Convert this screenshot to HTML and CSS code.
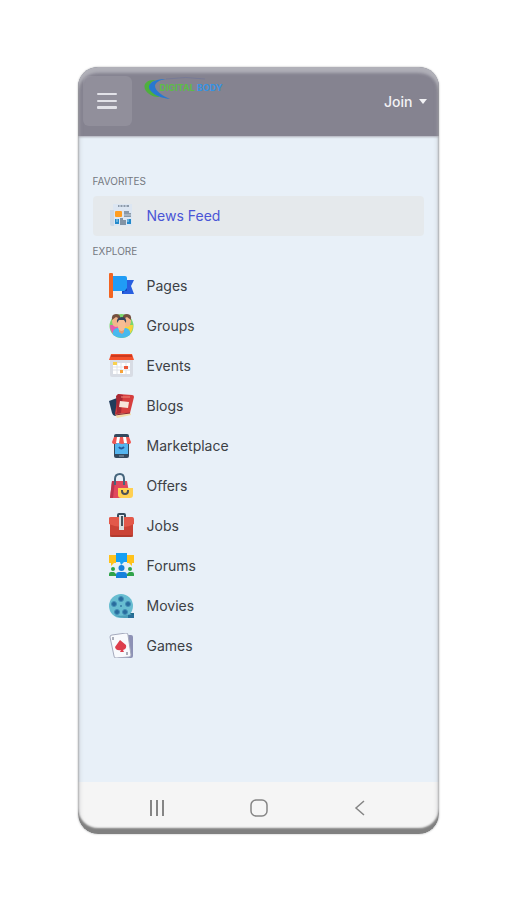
FILE: index.html
```html
<!DOCTYPE html>
<html lang="en">
<head>
<meta charset="utf-8">
<meta name="viewport" content="width=device-width, initial-scale=1">
<title>Menu</title>
<link rel="stylesheet" href="styles.css">
</head>
<body>
<div class="phone">
  <header class="topbar">
    <button class="menu-button" type="button" aria-label="Menu">
      <svg width="20" height="16" viewBox="0 0 20 16" fill="#e2e2e8"><rect y="0" width="20" height="2" rx="1"/><rect y="7" width="20" height="2" rx="1"/><rect y="13" width="20" height="3" rx="1"/></svg>
    </button>
    <a class="brand" href="#">
      <svg class="swoosh" width="64" height="24" viewBox="0 0 64 24">
        <path d="M12 4C2 3-2 9 2 15c4 5 9 6 14 6C10 18 6 15 6 10c0-3 2-5 6-6z" fill="#4fb03d"/>
        <path d="M22 3C13 3 7 5 5 10c-1 5 8 12 21 13-7-3-15-8-15-13 0-3 4-6 11-7z" fill="#2878d0"/>
        <path d="M22 3Q42 0 61 3" fill="none" stroke="#777a96"/>
      </svg>
      <span class="brand-text"><span class="brand-first">DIGITAL</span> <span class="brand-second">BODY</span></span>
    </a>
    <button class="join" type="button">Join
      <svg width="8" height="5" viewBox="0 0 8 5"><path d="M0 0h8L4 5z" fill="#f2f2f5"/></svg>
    </button>
  </header>
  <main class="panel">
    <h2 class="heading">FAVORITES</h2>
    <ul class="list">
      <li><a class="item active" href="#">
        <svg class="icon" viewBox="0 0 25 25"><path d="M4 1h19v22H4z" fill="#dce6f2"/><path d="M1 7h4v16H3q-2 0-2-2z" fill="#ccd8e6"/><path d="M9 2h11v2H9z" fill="#8d9bab"/><path d="M11 2v2m3-2v2m3-2v2" stroke="#dce6f2"/><rect x="6" y="8" width="7" height="6" rx="1" fill="#ff9d20"/><path d="M15 8h5v2h2v4h-7z" fill="#8999a9"/><path d="M15 12h7" stroke="#c3ced9"/><path d="M6 16h4v5H6zm12 0h4v5h-4z" fill="#2389cb"/><path d="M11 15h3v2h3v5h-6z" fill="#8394a5"/><path d="M8 16v3m11-3v3" stroke="#a7d6ef"/></svg>
        News Feed</a></li>
    </ul>
    <h2 class="heading">EXPLORE</h2>
    <ul class="list">
      <li><a class="item" href="#">
        <svg class="icon" viewBox="0 0 25 25"><path d="M15 7h10l-3 6 3 8H13z" fill="#285fe0"/><path d="M4 3h12q2 0 2 2v11q0 2-2 2H4z" fill="#209cf5"/><path d="M13 18h5v-3l-5 6z" fill="#1647bd"/><rect y="0" width="4" height="25" rx="1" fill="#f26422"/></svg>
        Pages</a></li>
      <li><a class="item" href="#">
        <svg class="icon" viewBox="0 0 25 25"><circle cx="12.500" cy="13" r="12" fill="#7bd66b"/><path d="M1 12a12 12 0 0 0 8 12l4-12z" fill="#e65bb0"/><path d="M24 12a12 12 0 0 1-8 12l-4-12z" fill="#f5d53c"/><path d="M4 22q-1-6 4-7h9q5 1 4 7-8 6-17 0z" fill="#48b9ee"/><ellipse cx="7" cy="8" rx="4" ry="6" fill="#f3b58c"/><ellipse cx="18" cy="8" rx="4" ry="6" fill="#f3b58c"/><path d="M3 7q-1-6 4-6 5 0 4 5L7 4zM14 6q-1-5 4-5 5 0 4 6l-4-3z" fill="#74513f"/><path d="M10 15h5v4l-2 2-3-2z" fill="#e69a70"/><ellipse cx="12.500" cy="12" rx="4" ry="6" fill="#f7bd94"/><path d="M8 10q-1-6 5-6 5 0 4 6l-2-3h-5z" fill="#34445c"/></svg>
        Groups</a></li>
      <li><a class="item" href="#">
        <svg class="icon" viewBox="0 0 25 25"><path d="M1 6h23v16q0 2-2 2H3q-2 0-2-2z" fill="#d8dce4"/><path d="M2 1h21l2 6H0z" fill="#f4512c"/><path d="M2 2h21v2H2z" fill="#cb3a20"/><path d="M4 10h17v11H4z" fill="#fff"/><path d="M8 10v11m4-11v11m5-11v11M4 14h17M4 17h17" stroke="#dfe2e7"/><path d="M4 9h4v3H4z" fill="#f8d14d"/><path d="M15 13h4v3h-4z" fill="#ed5736"/><path d="M11 17h3v3h-3z" fill="#f7a43a"/></svg>
        Events</a></li>
      <li><a class="item" href="#">
        <svg class="icon" viewBox="0 0 25 25"><path d="M0 8 8 5l7 16-9 2q-2 0-3-3z" fill="#213c5b"/><path d="m6 21 15-2 1 3-14 3z" fill="#f2dcaa"/><path d="m9 1 14 1q2 0 2 2l-4 16-15 1z" fill="#d63e3e"/><path d="m9 1-2 2 1 16-2 2 6-1 2-18z" fill="#a92934"/><path d="m11 8 9 1-1 6-9-1z" fill="#f7e5dc"/><path d="M12 4h9" stroke="#f28a7a"/><path d="m6 22 15-2" stroke="#8a2432"/></svg>
        Blogs</a></li>
      <li><a class="item" href="#">
        <svg class="icon" viewBox="0 0 25 25"><rect x="5" y="1" width="15" height="24" rx="2" fill="#34495e"/><path d="M6 4h13v17H6z" fill="#55b5ef"/><path d="M5 4h15l2 5q0 2-3 2-2 0-2-2-1 2-4 2t-4-2q-1 2-3 2-3 0-3-2z" fill="#ef5752"/><path d="M8 4h3l-1 6H7zm6 0h3l1 6h-3z" fill="#fff"/><path d="M10 14q2 3 5 0" fill="none" stroke="#25589a" stroke-width="2"/><path d="M10 23h5" stroke="#8da0b1"/></svg>
        Marketplace</a></li>
      <li><a class="item" href="#">
        <svg class="icon" viewBox="0 0 25 25"><path d="M3 8h15l3 17H1z" fill="#e1475e"/><path d="M3 8h3L4 25H1z" fill="#bb344d"/><path d="M6 12V6q0-5 5-5 4 0 4 5v6" fill="none" stroke="#45657c" stroke-width="2"/><path d="M9 15h15v7q0 3-3 3H12q-3 0-3-3z" fill="#ffd052"/><path d="M13 17v1q0 3 3 3t3-3v-1" fill="none" stroke="#4c5054" stroke-width="2"/></svg>
        Offers</a></li>
      <li><a class="item" href="#">
        <svg class="icon" viewBox="0 0 25 25"><path d="M9 5V2q0-1 1-1h5q1 0 1 1v3" fill="none" stroke="#394d5e" stroke-width="2"/><rect x="1" y="4" width="23" height="20" rx="2" fill="#cb4336"/><path d="M0 5q0-1 2-1h21q2 0 2 2v5q-5 3-12 3T0 11z" fill="#e3594a"/><path d="M10 3h5v14h-5z" fill="#d9dfdf"/><path d="M12 3h2v10h-2z" fill="#46535b"/><path d="M1 23h23" stroke="#983227"/></svg>
        Jobs</a></li>
      <li><a class="item" href="#">
        <svg class="icon" viewBox="0 0 25 25"><path d="M0 2h7v8H5l-3 3v-3H0zm18 0h7v8h-2v3l-3-3h-2z" fill="#ffc21b"/><path d="M7 0h11v9h-3l-3 3-1-3H7z" fill="#16a0f4"/><circle cx="12.500" cy="15" r="3" fill="#1681dc"/><path d="M7 25v-3q0-3 3-3h5q3 0 3 3v3z" fill="#1681dc"/><circle cx="4" cy="16" r="2" fill="#30a34b"/><circle cx="21" cy="16" r="2" fill="#30a34b"/><path d="M0 23v-2q0-2 2-2h3l2 2v2zm18 0v-2l2-2h3q2 0 2 2v2z" fill="#30a34b"/></svg>
        Forums</a></li>
      <li><a class="item" href="#">
        <svg class="icon" viewBox="0 0 25 25"><path d="M13 20h12v5H15z" fill="#236b8c"/><circle cx="12" cy="13" r="12" fill="#68bdd1"/><path d="M5 22q9 2 16-1l4 2v2q-14 1-20-3z" fill="#4e9fba"/><g fill="#286b9c" stroke="#438fb8"><circle cx="12" cy="6" r="2.500"/><circle cx="5" cy="11" r="2.500"/><circle cx="19" cy="11" r="2.500"/><circle cx="8" cy="19" r="2.500"/><circle cx="16" cy="19" r="2.500"/></g><circle cx="12" cy="13" r="1" fill="#347aa5"/><path d="M19 22h6v3h-6z" fill="#296f9a"/></svg>
        Movies</a></li>
      <li><a class="item" href="#">
        <svg class="icon" viewBox="0 0 25 25"><path d="M13 2h9q2 0 2 2v19q0 2-2 2H9z" fill="#8d91b5"/><path d="m3 2 14-2q2 0 2 2l3 20q0 2-2 2L7 25q-2 0-2-2L1 4q0-2 2-2z" fill="#f8fafd" stroke="#a5aabd"/><path d="m11 7 6 5q1 4-3 5l1 2h-4l1-2q-5 1-6-3z" fill="#dd3e4c"/><path d="M4 4v3m14 12v3" stroke="#5c6278"/></svg>
        Games</a></li>
    </ul>
  </main>
  <nav class="system-nav" aria-label="System">
    <button type="button" aria-label="Recent apps"><svg width="16" height="16" viewBox="0 0 16 16"><path d="M2 0v16M8 0v16M14 0v16" stroke="#858585" stroke-width="2"/></svg></button>
    <button type="button" aria-label="Home"><svg width="18" height="18" viewBox="0 0 18 18"><rect x="1" y="1" width="16" height="16" rx="5" fill="none" stroke="#858585" stroke-width="1.500"/></svg></button>
    <button type="button" aria-label="Back"><svg width="16" height="16" viewBox="0 0 16 16"><path d="M12 1 4 8l8 7" fill="none" stroke="#858585" stroke-width="1.500"/></svg></button>
  </nav>
</div>
</body>
</html>
```
FILE: styles.css
```css
* { box-sizing: border-box; }
body {
  margin: 0;
  min-height: 100vh;
  padding: 67px 15% 66px;
  display: flex;
  background: #fff;
  font-family: Inter, "Liberation Sans", sans-serif;
}
button { border: 0; padding: 0; background: none; font: inherit; color: inherit; }
svg { display: block; flex: none; }
.phone {
  position: relative;
  flex: 1;
  min-width: 0;
  display: flex;
  flex-direction: column;
  overflow: hidden;
  border-radius: 20px;
  background: #e8f0f8;
  box-shadow: 0 0 2px #aaa;
}
/* Bevelled edge over the screen */
.phone::after {
  content: "";
  position: absolute;
  inset: 0;
  border-radius: inherit;
  pointer-events: none;
  box-shadow: inset 0 -6px 2px #808080, inset 0 6px 3px rgba(185, 185, 192, 0.8), inset 0 0 4px 1px rgba(170, 170, 170, 0.5);
}
.topbar {
  height: 69px;
  padding: 9px 12px 9px 5px;
  display: flex;
  align-items: flex-start;
  background: #858390;
  box-shadow: 0 1px 2px #aaaab4;
}
.menu-button {
  width: 49px;
  height: 50px;
  display: grid;
  place-items: center;
  border-radius: 6px;
  background: #918f9b;
}
.brand {
  margin-left: 12px;
  display: grid;
  text-decoration: none;
}
.swoosh, .brand-text { grid-area: 1 / 1; }
.brand-text {
  padding: 6px 0 0 16px;
  font-size: 9px;
  line-height: 12px;
  font-weight: 700;
  white-space: nowrap;
}
.brand-first { color: #5cbd46; }
.brand-second { color: #3593e2; }
.join {
  height: 50px;
  margin-left: auto;
  display: flex;
  align-items: center;
  gap: 7px;
  color: #f2f2f5;
  font-size: 14px;
  font-weight: 500;
}
.panel { flex: 1; padding: 30px 15px 15px; }
.heading {
  margin: 0;
  font-size: 10px;
  line-height: 30px;
  font-weight: 400;
  color: #74787f;
}
.list { margin: 0; padding: 0; list-style: none; }
.item {
  height: 40px;
  padding: 0 16px 2px;
  display: flex;
  align-items: center;
  gap: 13px;
  border-radius: 4px;
  color: #3c4045;
  font-size: 14px;
  text-decoration: none;
}
.active { background: #e5e9ec; color: #4a55d6; }
.icon { width: 25px; height: 25px; }
.system-nav {
  height: 52px;
  padding: 0 28px;
  display: grid;
  grid-template-columns: repeat(3, 1fr);
  background: #f5f5f5;
}
.system-nav button { display: grid; place-items: center; }
```
